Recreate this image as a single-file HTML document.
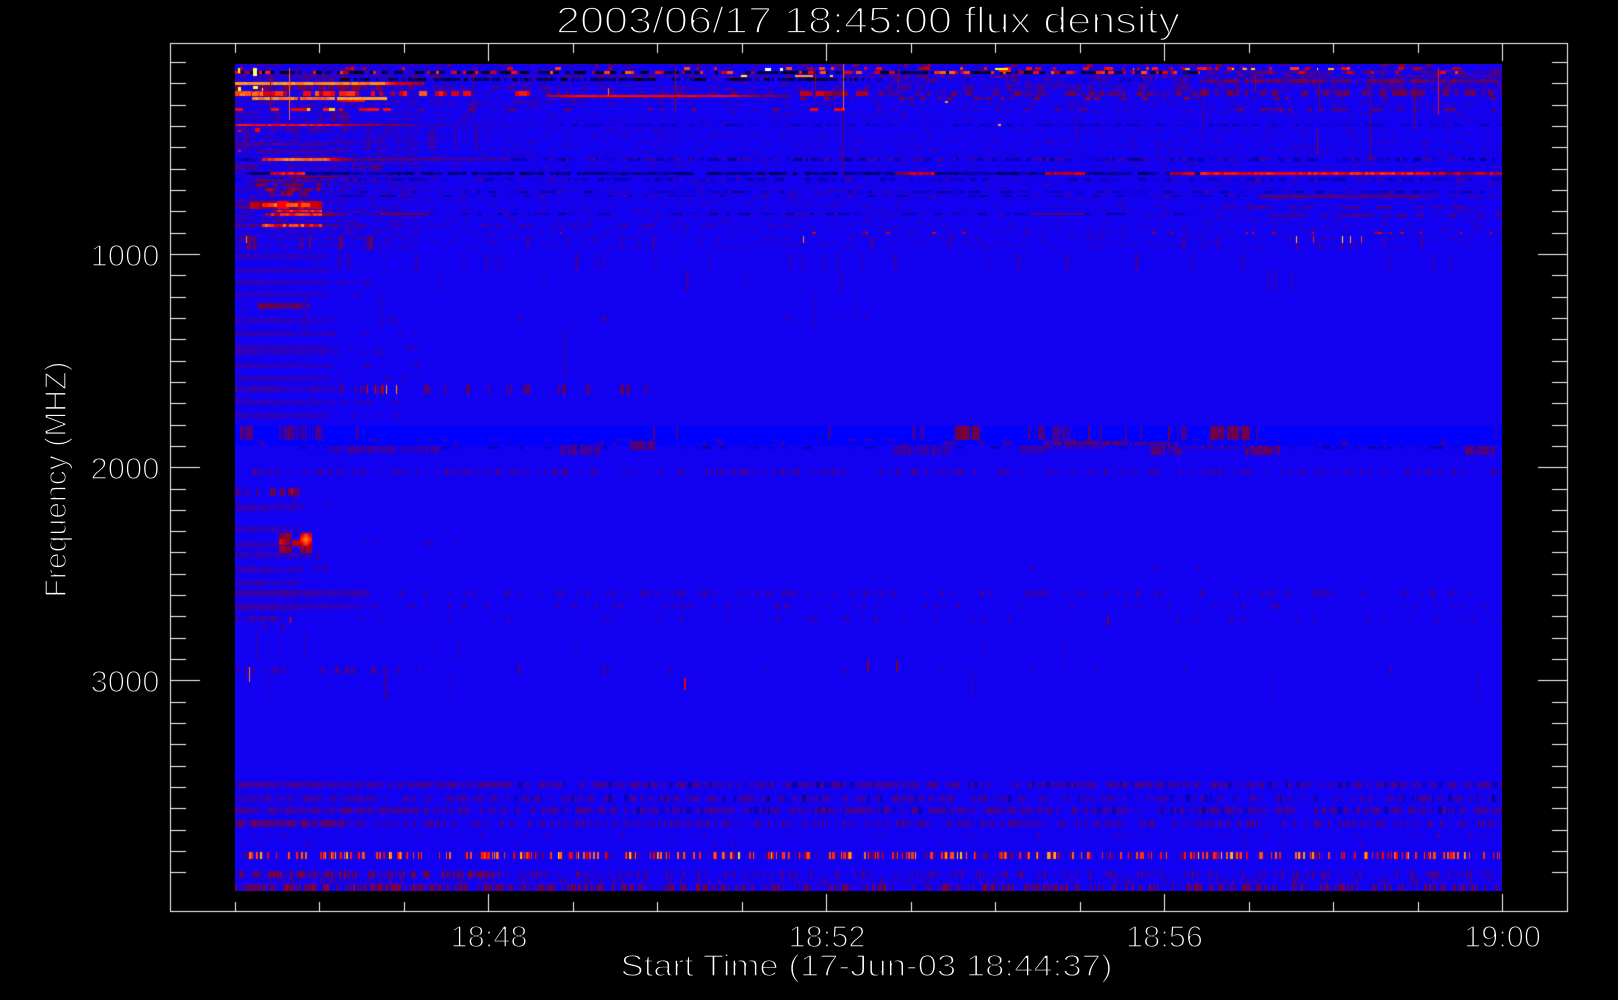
<!DOCTYPE html>
<html><head><meta charset="utf-8"><title>2003/06/17 18:45:00 flux density</title>
<style>
html,body{margin:0;padding:0;background:#000;width:1618px;height:1000px;overflow:hidden}
#wrap{position:relative;width:1618px;height:1000px;background:#000}
#blue{position:absolute;left:235px;top:64px;width:1267px;height:827px;background:#1200f0}
canvas,svg{position:absolute;left:0;top:0}
text{font-family:"Liberation Sans",sans-serif;fill:#fff;stroke:#000;stroke-width:1.45px}
</style></head><body>
<div id="wrap">
<div id="blue"></div>
<canvas id="c" width="1618" height="1000"></canvas>
<svg width="1618" height="1000" viewBox="0 0 1618 1000">
<text x="556" y="33" font-size="37" textLength="624" lengthAdjust="spacingAndGlyphs" style="stroke-width:1.7px">2003/06/17 18:45:00 flux density</text>
<text x="450.5" y="946.8" font-size="31" textLength="77" lengthAdjust="spacingAndGlyphs">18:48</text>
<text x="788.5" y="946.8" font-size="31" textLength="77" lengthAdjust="spacingAndGlyphs">18:52</text>
<text x="1126" y="946.8" font-size="31" textLength="77" lengthAdjust="spacingAndGlyphs">18:56</text>
<text x="1464" y="946.8" font-size="31" textLength="77" lengthAdjust="spacingAndGlyphs">19:00</text>
<text x="620.5" y="975.8" font-size="31" textLength="492" lengthAdjust="spacingAndGlyphs">Start Time (17-Jun-03 18:44:37)</text>
<text x="90.5" y="265.8" font-size="31" textLength="69" lengthAdjust="spacingAndGlyphs">1000</text>
<text x="90.5" y="478.8" font-size="31" textLength="69" lengthAdjust="spacingAndGlyphs">2000</text>
<text x="90.5" y="691.8" font-size="31" textLength="69" lengthAdjust="spacingAndGlyphs">3000</text>
<text transform="translate(65.8 597.5) rotate(-90)" x="0" y="0" font-size="31" textLength="236" lengthAdjust="spacingAndGlyphs">Frequency (MHZ)</text>
</svg>
</div>
<script>
(function(){
var cv=document.getElementById('c'),g=cv.getContext('2d');
var s=20030617;
function R(){s|=0;s=s+0x6D2B79F5|0;var t=Math.imul(s^s>>>15,1|s);t=t+Math.imul(t^t>>>7,61|t)^t;return((t^t>>>14)>>>0)/4294967296;}
var stops=[[-1,0,0,0],[-.5,0,0,110],[0,18,0,240],[.3,120,0,60],[.42,190,0,20],[.5,255,0,0],[.75,255,160,30],[.9,255,255,0],[1,255,255,255]];
function col(v){v=Math.max(-1,Math.min(1,v));for(var i=1;i<stops.length;i++){if(v<=stops[i][0]){var a=stops[i-1],b=stops[i],t=(v-a[0])/(b[0]-a[0]);return 'rgb('+(a[1]+(b[1]-a[1])*t|0)+','+(a[2]+(b[2]-a[2])*t|0)+','+(a[3]+(b[3]-a[3])*t|0)+')';}}return '#fff';}
function rect(x,y,w,h,v){g.fillStyle=col(v);g.fillRect(x,y,w,h);}
function P(y0,y1,x0,x1,d,lo,hi,cw,d2){cw=cw||3;if(d2===undefined)d2=d;var x=x0;while(x<x1){var t=(x-x0)/(x1-x0),dn=d+(d2-d)*t,w=cw*(1+(R()*2|0));if(R()<dn){rect(x,y0,Math.min(w,x1-x),y1-y0,lo+(hi-lo)*R());}x+=w;}}
function L(y0,y1,x0,x1,v0,v1,cw,j){cw=cw||3;j=j===undefined?.05:j;for(var x=x0;x<x1;x+=cw){var t=(x-x0)/(x1-x0);rect(x,y0,Math.min(cw,x1-x),y1-y0,v0+(v1-v0)*t+(R()-.5)*j*2);}}
function V(x,y0,y1,v,w){rect(x,y0,w||1,y1-y0,v);}
/* pure blue band */
g.fillStyle='#0000ff';g.fillRect(235,426,1267,15);g.fillRect(235,441,1267,4);

/* texture for the top region */
var yt;
for(yt=64;yt<250;yt+=3){
  P(yt,yt+2,235,1502,yt<92?.28:.2,.03,yt<92?.16:.09,3);
  P(yt,yt+2,235,420,yt<232?.4:.25,.05,.14,3);
}

/* -------- top region -------- */
P(64,67,235,1502,.08,.1,.36);
P(67,70,240,1502,.2,.36,.62,3);
P(71,74,235,1200,.7,-1,-.5,3);
P(71,74,235,1200,.3,.36,.66,3);
P(71,74,1200,1502,.5,.1,.3);P(71,74,1200,1502,.08,.4,.6);
P(75,78,235,1502,.45,.08,.2,3);
P(78,81,340,870,.75,-.9,-.3,2);P(78,81,235,340,.3,.1,.3);P(78,82,870,1200,.35,-.3,.2);
P(79,83,1200,1502,.85,.15,.32,2);
P(85,90,235,420,.65,.2,.36,3,.3);P(85,90,420,1000,.22,.06,.16);P(84,90,1000,1502,.25,.06,.17);
L(82,85,235,385,.76,.68);L(82,85,385,425,.55,.3);
P(91,96,235,530,.6,.38,.68,4,.45);P(91,96,530,800,.3,.1,.26,3);P(91,96,800,870,.5,.28,.48,4);P(91,96,870,1200,.45,.1,.28,3);P(90,96,1200,1502,.6,.13,.3,3);
P(97,100,800,1502,.2,.18,.36,3);P(100,104,235,700,.2,.06,.16,3);
P(103,106,235,1502,.15,.05,.12,3);
P(108,111,235,420,.4,.45,.55,4,.3);P(108,111,420,800,.14,.16,.3,4);P(108,111,860,1200,.18,.1,.22,3);P(108,111,1200,1502,.28,.13,.27,4);
P(112,122,235,500,.2,.06,.17,3,.05);
L(124,126,235,340,.52,.5);L(124,126,340,412,.42,.25);L(124,126,412,560,.12,.02);
P(124,126,560,1502,.55,-.3,-.03,3);
P(127,132,235,400,.25,.08,.2,3);P(130,150,235,500,.1,.06,.14,3);
rect(255,128,5,4,.5);rect(238,130,3,2,.5);rect(238,143,3,2,.5);rect(238,150,3,2,.5);
L(143,145,235,330,.22,.15);L(150,153,255,350,.16,.08);
P(156,157,290,340,.5,.2,.3);
/* y159 line */
P(158,161,235,1502,.6,-.45,-.03,3);P(158,161,350,1502,.3,.06,.17,3,.2);
L(158,161,262,285,.52,.65);L(158,161,285,330,.72,.62);L(158,161,330,352,.5,.3);L(158,161,352,510,.2,.1);
P(164,170,235,400,.25,.08,.18);
/* y173 line */
P(172,175,235,1200,.9,-.6,-.2,3);
L(172,175,270,305,.45,.5,3,.1);L(176,178,290,340,.3,.2);
L(172,175,895,935,.33,.43,3,.1);L(172,175,1045,1085,.36,.4,3,.1);L(172,175,1170,1195,.35,.48,3,.1);
L(172,175,1200,1430,.5,.52,3,.07);L(172,175,1430,1502,.38,.42,3,.1);
P(178,181,235,1502,.7,-.3,.17,3);L(179,182,255,330,.22,.14);
P(183,187,250,330,.5,.2,.35,3);
P(188,191,265,320,.6,.25,.42,3);P(191,196,260,310,.55,.2,.36,3);
P(191,193,340,1502,.65,-.4,.13,4);P(195,197,340,1260,.55,-.35,.16,4);L(195,198,1260,1420,.18,.2,3,.04);P(195,197,1420,1502,.5,.08,.18,4);
P(201,209,250,322,.85,.3,.52,3);P(203,207,262,316,.75,.5,.76,3);
L(200,202,235,262,.12,.2);L(205,209,235,250,.14,.22);P(206,209,1200,1502,.35,.06,.17,4);
L(210,212,275,322,.5,.6,3,.1);L(213,216,265,322,.45,.55,3,.1);L(213,216,322,345,.3,.15);
P(213,215,350,1200,.5,-.4,.13,4);L(213,215,1030,1085,.18,.2);L(213,215,380,430,.28,.22);P(214,217,1200,1502,.4,.08,.18,4);
P(218,222,235,300,.35,.1,.18);
L(224,227,262,322,.58,.55,3,.15);L(224,227,235,262,.18,.14);L(224,227,322,370,.16,.08);
P(224,227,370,800,.25,.05,.13,3);
/* sparse dots y233 */
P(232,234,560,1502,.08,.3,.48,2);
/* streak rows y236-250 */
P(236,250,235,400,.14,.1,.3,2);
P(236,250,400,1502,.03,.08,.2,1);
rect(246,236,1,7,.7);rect(1296,236,1,7,.8);rect(1342,236,1,7,.88);rect(1350,236,1,7,.75);rect(1361,236,1,7,.6);rect(1313,236,1,7,.55);rect(803,236,1,7,.72);
V(1296,243,250,.3);V(1342,243,250,.3);V(1350,243,250,.3);
/* yellow etc top blocks */
[[238,68,2,5,.9],[253,68,4,8,.95],[238,87,3,4,.92],[253,86,5,3,.92],[240,93,5,3,.7],[252,92,5,4,.68],[260,92,3,4,.7],[262,88,1,3,.95],
[765,68,6,3,1],[780,68,3,3,.98],[995,68,13,2,.9],[999,70,12,2,.55],[741,75,6,2,.92],[795,75,18,2,.75],[830,75,3,2,.85],[1232,68,2,2,.85],
[1185,68,5,2,.75],[1133,68,1,2,.75],[1317,68,1,2,.95],[1328,68,6,2,.8],[1243,68,4,2,.78],[1251,68,4,2,.85],[945,101,3,2,.75],[998,124,3,2,.75],[1076,136,1,3,.7]
].forEach(function(a){rect(a[0],a[1],a[2],a[3],a[4]);});
/* thick orange segments */
L(97,100,252,298,.72,.7,3,.06);L(97,100,300,335,.66,.68,3,.06);L(97,100,337,387,.74,.76,3,.02);L(100,102,337,365,.45,.5);
[[307,108,3,3,.82],[329,108,6,3,.84]].forEach(function(a){rect(a[0],a[1],a[2],a[3],a[4]);});
/* long red y96 */
L(95,97,547,570,.4,.5);L(95,97,570,735,.52,.5,3,.02);L(95,97,735,791,.45,.2);L(97,98,560,700,.3,.22);
P(108,111,810,845,.6,.48,.52,4);
/* vertical streaks */
V(843,64,110,.66);V(843,110,175,.28);
[[675,68,112,.36],[815,68,100,.34],[608,88,95,.7],[898,68,90,.36],[1438,68,115,.52],[1370,90,160,.28],[1414,85,130,.32],
[1255,74,92,.38],[1317,130,155,.36],[1319,68,110,.32],[289,68,120,.66],[270,68,110,.32],[473,68,120,.28],[1203,98,132,.24],[1395,72,95,.24],[1076,120,140,.2]].forEach(function(a){V(a[0],a[1],a[2],a[3]);});

/* -------- middle -------- */
/* left faint rows */
var ys=[254,268,280,292,318,331,345,350,363,376,400,413];
ys.forEach(function(y){L(y,y+5,235,330,.09,.055,3,.025);P(y,y+5,330,420,.25,.03,.08,3);});
L(303,309,258,310,.26,.19,3,.06);
/* sparse vertical streak rows */
P(254,270,235,1502,.08,.04,.11,2);P(270,292,235,1502,.035,.03,.09,2);P(292,330,235,1000,.02,.03,.08,2);P(330,380,235,600,.015,.03,.08,2);
P(315,322,235,900,.05,.05,.12,2);P(368,370,235,1502,.02,.03,.07,1);
/* y388 row */
L(386,392,235,340,.11,.07);P(385,394,340,655,.2,.1,.26,2);
[367,375,382].forEach(function(x){V(x,385,394,.45);});V(386,385,394,.72);V(396,385,394,.72);
P(396,404,235,330,.4,.05,.1);
/* 1900 band */
var cl=[[240,253,.7,.14,.24],[285,292,.9,.24,.32],[279,330,.45,.1,.22],[315,320,.7,.14,.22],[356,358,1,.22,.22],[653,655,1,.2,.2],[676,678,.7,.14,.14],[828,830,1,.2,.24],[912,916,.7,.1,.14],[920,925,.7,.1,.14],[955,980,.92,.24,.32],[940,950,.5,.14,.18],
[1028,1030,1,.2,.2],[1035,1045,.8,.14,.22],[1052,1075,.7,.1,.18],[1088,1090,1,.24,.24],[1100,1102,.8,.14,.14],[1125,1127,1,.14,.18],[1140,1142,.8,.14,.14],[1168,1170,1,.28,.28],[1175,1187,.6,.14,.18],[1210,1250,.85,.2,.32],[1256,1258,.8,.14,.14],[1495,1497,.9,.1,.1]];
cl.forEach(function(a){P(426,440,a[0],a[1],a[2],a[3],a[4],1);});
P(439,441,235,1502,.2,.05,.13,3);
P(441,445,235,1502,.08,.06,.13,3);
P(446,449,235,1502,.4,-.28,.03,4);
[[630,655,441,450,.14,.22],[1045,1120,441,445,.14,.3],[1120,1176,442,445,.12,.24],[1020,1070,446,449,.1,.2],[1070,1105,446,449,.08,.16],[1150,1176,446,449,.14,.24],[1170,1280,446,449,.08,.16],[1250,1280,446,450,.18,.28],[1465,1495,446,455,.14,.24],[890,950,445,455,.08,.18],[1020,1045,449,454,.08,.14],[1150,1182,449,455,.14,.24],[1245,1280,449,455,.12,.26],[560,600,445,455,.1,.22],[330,440,446,453,.06,.16]].forEach(function(a){P(a[2],a[3],a[0],a[1],.8,a[4],a[5],1);});
/* streak row y470 */
P(469,475,235,1502,.28,.09,.18,1);
P(488,496,235,300,.5,.07,.14,3);P(488,496,270,300,.7,.18,.3,2);
rect(291,488,2,6,.42);
P(496,503,275,296,.6,.14,.22,2);
P(503,508,235,330,.3,.05,.1);

/* -------- blob -------- */
[505,526,542,552,567,580,605].forEach(function(y){L(y,y+6,235,y==552||y==542?312:300,.09,.055,3,.035);});
P(540,546,300,480,.18,.03,.09,3);
L(533,539,279,292,.28,.36,2,.05);L(539,545,279,290,.42,.34,2,.06);L(546,553,279,292,.36,.28,2,.05);
L(540,546,292,300,.42,.38,2,.05);L(546,553,300,312,.36,.3,2,.05);
for(var x=300;x<312;x++){var d=Math.abs(x-305.5)/6;for(var y=533;y<546;y++){var e=Math.abs(y-539)/8;rect(x,y,1,1,.72-.2*d-.22*e);}}
P(553,560,235,320,.3,.07,.14,3);

/* -------- lower -------- */
P(565,572,235,330,.4,.04,.1,3);
L(590,597,235,370,.12,.085,2,.035);P(590,597,370,1502,.25,.05,.12,2);
L(603,609,235,360,.1,.07,2,.03);P(603,609,360,1502,.18,.04,.1,2);
P(616,622,235,300,.6,.07,.16,2);P(616,622,300,1502,.12,.04,.1,2);rect(290,617,1,6,.5);
P(624,630,235,300,.3,.06,.13,2);
P(630,660,235,380,.05,.04,.12,1);
P(640,660,380,1502,.008,.03,.07,1);
P(667,674,235,400,.22,.09,.18,2);P(667,674,400,1502,.035,.07,.16,1);
P(674,700,235,400,.03,.04,.11,1);P(674,700,400,1502,.01,.04,.09,1);
V(249,667,682,.7);V(245,667,675,.3);
[[867,660,672,.32],[896,660,672,.32],[684,678,690,.46],[1107,615,626,.26],[518,664,674,.2],[603,664,676,.16],[1030,564,570,.16],[1155,566,570,.16],[1198,566,570,.16]].forEach(function(a){V(a[0],a[1],a[2],a[3],2);});
/* bottom rows */
function bot(y0,y1,dl,lo,hi){P(y0,y1,235,500,dl,lo,hi,2,dl*.72);P(y0,y1,500,1502,dl*.72,lo,hi,2);P(y0,y1,500,1502,.12,-.3,-.08,2);}
bot(782,788,.95,.07,.18);
bot(795,802,.8,.05,.14);
bot(807,814,.85,.07,.17);
P(820,827,235,345,.75,.12,.26,2);P(820,827,345,1502,.35,.08,.2,1);
P(834,838,235,1502,.06,.07,.15,1);P(840,848,235,1502,.025,.04,.1,1);
/* bright row */
P(852,859,235,1502,.3,.46,.68,1);P(852,859,235,1502,.04,.7,.85,1);P(852,859,235,1502,.12,.1,.26,1);
P(871,878,235,500,.5,.14,.34,1);P(871,878,500,1502,.2,.1,.24,1);
P(878,884,235,1502,.15,.07,.18,1);
P(884,891,235,430,.6,.16,.4,1);P(884,891,430,1502,.4,.14,.34,1);

/* -------- axes -------- */
g.fillStyle='#fff';
g.fillRect(170,43,1398,1);g.fillRect(170,911,1398,1);g.fillRect(170,43,1,869);g.fillRect(1567,43,1,869);
var n,m,yy,xx;
for(n=-9;n<=29;n++){yy=Math.floor(254.5+21.32*n);m=(n%10===0);var l=m?29:15;g.fillRect(171,yy,l,1);g.fillRect(1567-l,yy,l,1);}
for(n=0;n<16;n++){xx=Math.floor(235.5+84.47*n);m=(n%4===3);var t=m?17:9;g.fillRect(xx,44,1,t);g.fillRect(xx,911-t,1,t);}
})();
</script>
</body></html>
